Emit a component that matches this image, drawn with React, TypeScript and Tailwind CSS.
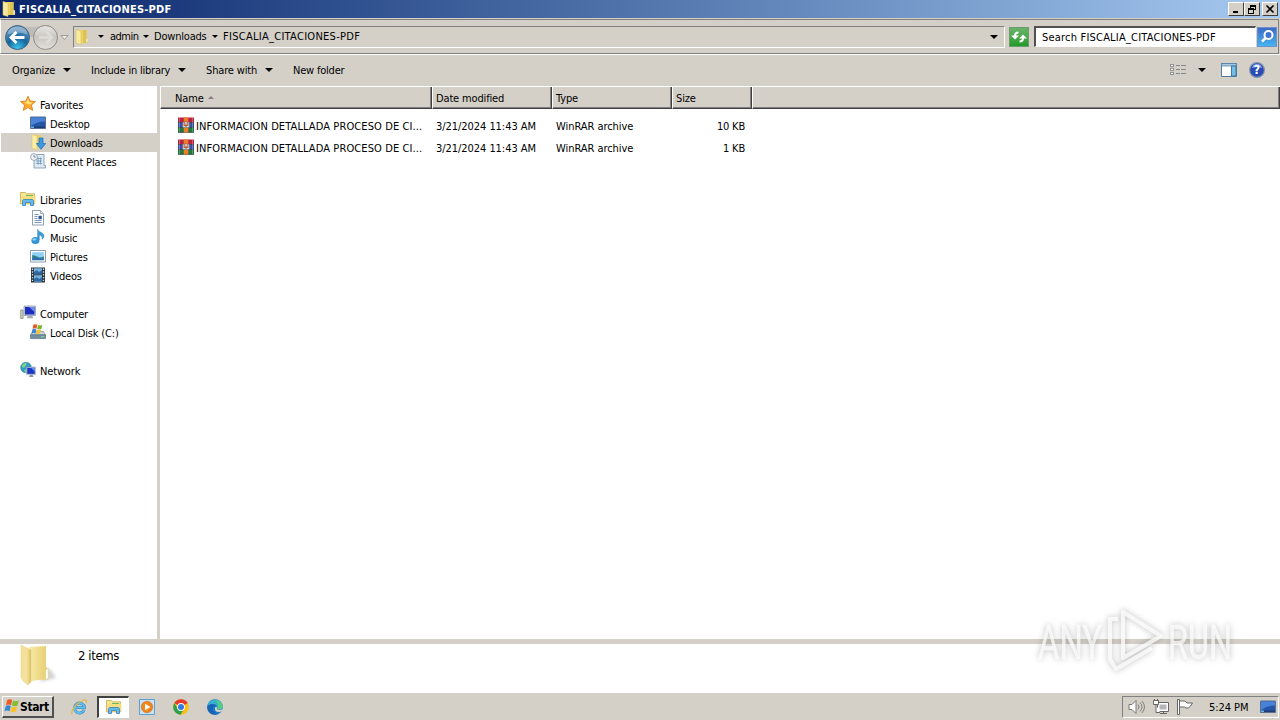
import type { ReactNode } from "react";

type IconProps = { size?: number };

const FolderIcon = ({ size = 16 }: IconProps) => (
  <svg width={size} height={size} viewBox="0 0 16 16" className="shrink-0">
    <path d="M5 1h7.500v13H5z" fill="#ecd469" />
    <path d="M9 1h3.500v8l1.500 1v4H9z" fill="#dfc350" />
    <path d="M2 .5l5 1.500v13.500L2 14z" fill="#f8eba0" stroke="#d9bd55" strokeWidth=".6" />
    <path d="M12.200 9l1.600.5v4h-1.600z" fill="#fff" stroke="#c8b35e" strokeWidth=".4" />
  </svg>
);

const StarIcon = () => (
  <svg width="16" height="16" viewBox="0 0 16 16">
    <path d="M8 .2l2.100 4.800 5.500.5-4.200 3.500 1.300 5.400L8 11.600l-4.700 2.800L4.600 9 .4 5.500 5.900 5z" fill="#fbaa2c" stroke="#d98222" strokeWidth=".9" />
    <path d="M8 2.600l1.400 3.500 3.400.4L10 8.600 8 8 3.600 6.600l2.900-.5z" fill="#ffe27a" />
  </svg>
);

const DesktopIcon = () => (
  <svg width="16" height="16" viewBox="0 0 16 16">
    <path d="M.5 2h15v11.500H.5z" fill="#2455a8" stroke="#5b6f91" />
    <path d="M1 2.500h14v4Q8 6 1 11z" fill="#4a82d8" />
    <path d="M1 11.500h14V13H1z" fill="#1c3c73" />
    <path d="M1 11.500h3V13H1z" fill="#62b4e8" />
  </svg>
);

const DownloadsIcon = () => (
  <svg width="16" height="16" viewBox="0 0 16 16">
    <path d="M2 1h9.500v13H2z" fill="#ecd169" />
    <path d="M2 .5l5 1.200v13.800l-5-1z" fill="#faeea8" stroke="#dcc35f" strokeWidth=".6" />
    <path d="M9 4h4v5.500h2.700L11 15.300 6.300 9.500H9z" fill="#3b9ae3" stroke="#1f69b2" strokeWidth=".7" />
  </svg>
);

const RecentIcon = () => (
  <svg width="16" height="16" viewBox="0 0 16 16">
    <path d="M4 1.500h10v11h1.500V15H4z" fill="#dfe9f2" stroke="#7c8fa3" strokeWidth=".8" />
    <path d="M6 5.500h6M6 8h6M6 10.500h6M8 4.500v7M10.500 4.500v7" stroke="#6c97bb" strokeWidth=".8" />
    <circle cx="4" cy="4" r="3.400" fill="#f3f6fa" stroke="#8996a5" strokeWidth=".8" />
    <path d="M4 2v2h1.800" fill="none" stroke="#53708f" strokeWidth=".8" />
  </svg>
);

const LibrariesIcon = () => (
  <svg width="16" height="16" viewBox="0 0 16 16">
    <path d="M.5 1.500h5l1 1.300h8v10H.5z" fill="#f7e695" stroke="#c9a849" strokeWidth=".8" />
    <path d="M2 4.500h12.500l1 1V12H1z" fill="#f5dd80" />
    <path d="M6 4.500h7" stroke="#6bb867" />
    <path d="M2.500 14.500v-5l1.200-1h8.600l1.200 1v5h-3v-3h-5v3z" fill="#6ab8e8" stroke="#2d84c0" strokeWidth=".8" />
  </svg>
);

const DocumentIcon = () => (
  <svg width="16" height="16" viewBox="0 0 16 16">
    <path d="M2.500.5h8l3 3V15h-11z" fill="#fdfeff" stroke="#8493a5" strokeWidth=".9" />
    <path d="M10.500.5v3h3" fill="#d7e3ef" stroke="#8493a5" strokeWidth=".7" />
    <path d="M4.500 4.500h4M4.500 6.500h3M4.500 8.500h3M4.500 10.500h7M4.500 12.500h7" stroke="#6c8cb4" strokeWidth=".9" />
    <path d="M8.500 5.800h3.300v3.400H8.500z" fill="#305796" />
  </svg>
);

const MusicIcon = () => (
  <svg width="16" height="16" viewBox="0 0 16 16">
    <path d="M7.600 11V.2c.4 2.700 6.400 3.300 6.400 6.600 0 1.600-.8 2.600-2 3.400.6-2.600-.8-3.800-2.700-4.200v5z" fill="#3c9bd9" stroke="#2275b2" strokeWidth=".4" />
    <ellipse cx="5.400" cy="11.500" rx="4" ry="3.600" fill="#2f94d8" />
    <ellipse cx="4.400" cy="10.400" rx="2" ry="1.200" fill="#8dd0f5" />
  </svg>
);

const PicturesIcon = () => (
  <svg width="16" height="16" viewBox="0 0 16 16">
    <path d="M.5 2.500h15V14H.5z" fill="#fff" stroke="#8b9bab" />
    <path d="M2.200 4.200h11.600v8H2.200z" fill="#8fd0f2" />
    <path d="M2.200 7q3 .5 6 2t5.600-1v3.700H2.200z" fill="#2e7f8e" />
    <path d="M2.200 10.500h11.600v1.700H2.200z" fill="#2d69b0" />
  </svg>
);

const VideosIcon = () => (
  <svg width="16" height="16" viewBox="0 0 16 16">
    <path d="M1 .5h14v15H1z" fill="#27333f" />
    <path d="M4 1.200h8v6H4zM4 8.300h8v6.500H4z" fill="#7ab4e0" />
    <path d="M4 5l3-2 2 2 3-2v4H4zM4 12l3-2 2 2 3-2v4.500H4z" fill="#2f6aa8" />
    <path d="M2.500 1.500v14M13.500 1.500v14" stroke="#d6dde4" strokeWidth="1.300" strokeDasharray="1.400 1.400" />
  </svg>
);

const ComputerIcon = () => (
  <svg width="16" height="16" viewBox="0 0 16 16">
    <path d="M.7 5h2.400v8.500H.7z" fill="#c9d5b5" stroke="#788574" strokeWidth=".7" />
    <path d="M4 1h11.500v9.500H4z" fill="#c9cfdb" stroke="#8690a3" strokeWidth=".7" />
    <path d="M5 2h9.500v7.500H5z" fill="#1a2ec0" />
    <path d="M9 2h5.500v5z" fill="#6e8bee" />
    <path d="M8 10.700h4l1.500 2.500h-7z" fill="#a3abb8" />
  </svg>
);

const DiskIcon = () => (
  <svg width="16" height="16" viewBox="0 0 16 16">
    <path d="M2.500 7.500h11l2 3.500H.5z" fill="#c5d3dc" stroke="#71838f" strokeWidth=".6" />
    <path d="M.5 10.800h15v3.800H.5z" fill="#718f9f" stroke="#526b79" strokeWidth=".6" />
    <path d="M11 12.500h3" stroke="#79e26f" />
    <path d="M3.400.6q2-.9 4 .1l-.9 4q-1.800-.9-3.900 0z" fill="#ea5a28" />
    <path d="M8 1q2 .9 4.400 0l-1 3.900q-2 .9-4.200 0z" fill="#79b82f" />
    <path d="M2.400 5.300q2-.9 4 .1l-.9 4q-1.800-.9-4 0z" fill="#3b86d5" />
    <path d="M7 5.600q2 .9 4.200 0l-1 3.900q-2 .9-4.100 0z" fill="#f6c02d" />
  </svg>
);

const NetworkIcon = () => (
  <svg width="16" height="16" viewBox="0 0 16 16">
    <circle cx="6" cy="5.500" r="5.300" fill="#2f9cc6" stroke="#297595" strokeWidth=".6" />
    <path d="M2 3q3-3 5-1.500L5 5 2.500 6zM4 8l3-1 .5 3-2 1z" fill="#7ed28a" />
    <path d="M6.500 5h9v7.700h-9z" fill="#cbd5e2" stroke="#8492a8" strokeWidth=".5" />
    <path d="M7.200 5.800h7.600v6.100H7.200z" fill="#1b35c4" />
    <path d="M11 5.800h3.800v4z" fill="#6990ee" />
    <path d="M10 12.700h2.500l1 2.300H9z" fill="#8791a5" />
  </svg>
);

const RarIcon = () => (
  <svg width="16" height="16" viewBox="0 0 16 16" className="mb-1 shrink-0">
    <path d="M0 .5h16v5H0z" fill="#b82342" />
    <path d="M0 5.500h16v5H0z" fill="#3b50a5" />
    <path d="M0 10.500h16v5H0z" fill="#21793f" />
    <path d="M0 5.500h16M0 10.500h16M0 15.300h16" stroke="#252a33" strokeWidth=".7" />
    <path d="M1.500.5v15M14.500.5v15" stroke="#fff" strokeOpacity=".25" />
    <path d="M5.700.5h4.600v15H5.700z" fill="#ee7c2b" />
    <path d="M4.700 5h6.600v5.500H4.700z" fill="#dce2e8" stroke="#59606b" strokeWidth=".5" />
    <path d="M6.200 5v3.500h3.600V5" fill="none" stroke="#d15728" strokeWidth="1.100" />
    <path d="M8 6.500V10" stroke="#555" strokeWidth=".8" />
  </svg>
);

const Flag = ({ size = 16 }: IconProps) => (
  <svg width={size} height={size} viewBox="0 0 16 16" className="shrink-0">
    <path d="M3.200 2Q6 .3 8.200 2L7 7.200Q4.500 6 2 7.200z" fill="#ee5a26" />
    <path d="M9 2.400q2.800 1.500 6 0l-1.500 5.200q-2.800 1.300-5.600 0z" fill="#82bd35" />
    <path d="M1.800 8q2.600-1.400 5 .1l-1.300 5.200q-2.300-1.500-5 0z" fill="#3586d8" />
    <path d="M7.700 8.500q2.800 1.400 5.500 0L12 13.600q-2.800 1.500-5.600 0z" fill="#f8c22c" />
  </svg>
);

const IeIcon = () => (
  <svg width="18" height="18" viewBox="0 0 18 18" fill="none">
    <path d="M14.200 11.800A5 5 0 1 1 14.500 9.600H5.500" stroke="#2a86c6" strokeWidth="2.800" />
    <path d="M14.200 11.800A5 5 0 1 1 14.500 9.600H5.500" stroke="#62c0f2" strokeWidth="1.800" />
    <path d="M2.500 16.300C0 15.500 4 7.500 9.500 4.200 14 1 17.500.5 16 5.300" stroke="#e5b634" strokeWidth="1.200" />
  </svg>
);

const MediaIcon = () => (
  <svg width="16" height="16" viewBox="0 0 16 16">
    <path d="M.5.5h15v15H.5z" fill="#c9e2f5" stroke="#5d9fd1" />
    <circle cx="8" cy="8" r="5.700" fill="#f08519" stroke="#d06a10" strokeWidth=".6" />
    <path d="M6 4.700L11.500 8 6 11.300z" fill="#fff" />
  </svg>
);

const ChromeIcon = () => (
  <svg width="16" height="16" viewBox="0 0 16 16">
    <circle cx="8" cy="8" r="7.800" fill="#fbc116" />
    <path d="M8 8L1.250 4.100A7.800 7.800 0 0 1 14.750 4.100z" fill="#e33b2e" />
    <path d="M1.250 4.100A7.800 7.800 0 0 0 7.500 15.800L11 10 5 10z" fill="#2da24c" />
    <circle cx="8" cy="8" r="3.900" fill="#fff" />
    <circle cx="8" cy="8" r="3" fill="#3578e5" />
  </svg>
);

const EdgeIcon = () => (
  <svg width="16" height="16" viewBox="0 0 16 16">
    <circle cx="8" cy="8" r="7.800" fill="#1b7ac9" />
    <path d="M.4 7C1.500-1.500 14.500-1.500 15.800 7c.2 3-3 4.200-5.600 3.200C11.500 8 10 5.300 6.500 5.200 3.500 5.100 1 6 .4 7z" fill="#36b0d0" />
    <path d="M9 1q6 1 6.800 6c.2 3-3 4.200-5.600 3.200Q12 6 9 1z" fill="#5fd36b" fillOpacity=".75" />
    <path d="M.3 7.500C2 4 8.500 4 9.500 7.500 6.500 6.200 5 9 6.500 12c1 2 3 3 5 3C5 17.500-.2 13 .3 7.500z" fill="#1763b5" />
    <path d="M9.400 7.600c1 1.200.4 2 .5 2.600 1.600 1.200 4.400 1 6-.4l-.6 1.700c-1.200 1-2.500 1.500-4.100 1.500-3.500 0-4.300-4.500-1.800-5.400z" fill="#d6d1c8" />
  </svg>
);

const Arrow = ({ className = "" }: { className?: string }) => (
  <span className={`h-0 w-0 shrink-0 border-x-[4px] border-t-[4px] border-x-transparent border-t-black ${className}`} />
);

const SmallArrow = ({ className = "" }: { className?: string }) => (
  <span className={`h-0 w-0 shrink-0 border-x-[3px] border-t-[3px] border-x-transparent border-t-black ${className}`} />
);

const WindowButton = ({ children, className = "" }: { children: ReactNode; className?: string }) => (
  <button className={`flex h-[14px] w-4 items-center justify-center border border-t-white border-l-white border-r-[#404040] border-b-[#404040] bg-[#d4d0c8] ${className}`}>
    <svg width="12" height="12" viewBox="0 0 12 12" fill="none" stroke="#000" shapeRendering="crispEdges" className="shrink-0">
      {children}
    </svg>
  </button>
);

const TitleBar = () => (
  <div className="flex h-[18px] items-center bg-linear-to-r from-[#0a246a] to-[#a6caf0] pr-[2px] pl-px">
    <FolderIcon />
    <span className="ml-[2px] pt-[2px] text-[11px] font-bold tracking-[0.22px] text-white">FISCALIA_CITACIONES-PDF</span>
    <div className="ml-auto flex">
      <WindowButton>
        <path d="M3 9h5" strokeWidth="2" />
      </WindowButton>
      <WindowButton>
        <path d="M4 2h6M4 3h6M4.500 2v3M9.500 2v5M8 6.500h2M2 5h6M2 6h6M2.500 5v6M7.500 5v6M2 10.500h6" />
      </WindowButton>
      <WindowButton className="ml-[2px]">
        <path d="M2.500 2.500l7 7M9.500 2.500l-7 7" strokeWidth="1.600" shapeRendering="auto" />
      </WindowButton>
    </div>
  </div>
);

const NavButtons = () => (
  <svg width="70" height="30" viewBox="0 0 70 30" className="shrink-0">
    <defs>
      <radialGradient id="back" cx=".5" cy=".95" r=".8">
        <stop offset="0" stopColor="#38c6ee" />
        <stop offset=".55" stopColor="#17659f" />
        <stop offset="1" stopColor="#5b91bb" />
      </radialGradient>
      <linearGradient id="forward" x1="0" y1="0" x2="0" y2="1">
        <stop offset="0" stopColor="#e8e7e4" />
        <stop offset=".5" stopColor="#c9c6c0" />
        <stop offset="1" stopColor="#e3e1dd" />
      </linearGradient>
    </defs>
    <path d="M14 3q17 4 33 0l10 12H14z" fill="#bdbcb9" />
    <circle cx="16.500" cy="15.500" r="12" fill="url(#back)" stroke="#45647f" />
    <path d="M6.500 12.500Q7.500 4.500 16.500 4.500t10 8q-10-4-20 0z" fill="#fff" fillOpacity=".3" />
    <path d="M15.500 10l-5.500 5.500 5.500 5.500M10.500 15.500h13" fill="none" stroke="#fff" strokeWidth="2.800" />
    <circle cx="44.500" cy="15.500" r="12" fill="url(#forward)" stroke="#8c8b89" />
    <path d="M45.500 10l5.500 5.500-5.500 5.500M51 15.500H38" fill="none" stroke="#dedcd8" strokeWidth="2.500" />
    <path d="M60 13.500h7l-3.500 4z" fill="#eee" stroke="#8a8883" strokeWidth=".8" />
  </svg>
);

const AddressBar = () => (
  <div className="mt-px mr-px flex h-[35px] items-center border border-t-[#808080] border-r-[#808080] border-b-[#808080] border-l-white">
    <NavButtons />
    <div className="ml-[2px] flex h-[22px] min-w-0 flex-1 items-center border border-t-[#808080] border-r-white border-b-white border-l-[#808080] pr-[6px]">
      <FolderIcon />
      <SmallArrow className="ml-[8px]" />
      <span className="ml-[6px] w-[28px] whitespace-nowrap tracking-[-0.5px]">admin</span>
      <SmallArrow className="ml-[5px]" />
      <span className="ml-[5px] w-[53px] whitespace-nowrap tracking-[-0.2px]">Downloads</span>
      <SmallArrow className="ml-[5px]" />
      <span className="ml-[5px] whitespace-nowrap tracking-[0.28px]">FISCALIA_CITACIONES-PDF</span>
      <Arrow className="ml-auto" />
    </div>
    <button className="ml-[4px] flex h-5 w-5 items-center justify-center border border-[#6d9c70] bg-linear-to-b from-[#68b36a] to-[#219b25]">
      <svg width="18" height="18" viewBox="0 0 18 18" fill="none" stroke="#fff" strokeWidth="2">
        <path d="M8.500 4.500Q5 4.500 5 8" />
        <path d="M1 7.500L5 11.500l4-4z" fill="#fff" stroke="none" />
        <path d="M9.500 13.500Q13 13.500 13 10" />
        <path d="M9 10.500l4-4 4 4z" fill="#fff" stroke="none" />
      </svg>
    </button>
    <div className="ml-[5px] flex h-[21px] w-[222px] items-center border-t-2 border-r border-b border-l-2 border-t-[#505050] border-r-white border-b-white border-l-[#505050] bg-white pl-[6px]">
      <span className="whitespace-nowrap pt-px tracking-[0.2px]">Search FISCALIA_CITACIONES-PDF</span>
    </div>
    <button className="mr-px ml-px flex h-5 w-[20px] items-center justify-center border border-[#6d91cc] bg-linear-to-b from-[#3c6ac8] to-[#45b4f0]">
      <svg width="17" height="17" viewBox="0 0 17 17" fill="none" stroke="#fff">
        <circle cx="9.500" cy="7" r="4" fill="#3c73d5" strokeWidth="2" />
        <path d="M6.500 10L3 13.500" strokeWidth="2.500" />
      </svg>
    </button>
  </div>
);

const Toolbar = () => (
  <div className="flex h-[31px] items-center border-t border-white pl-3">
    <span className="w-[44px] whitespace-nowrap pt-[2px] tracking-[-0.15px]">Organize</span>
    <Arrow className="ml-[7px]" />
    <span className="ml-[20px] w-[80px] whitespace-nowrap pt-[2px] tracking-[-0.22px]">Include in library</span>
    <Arrow className="ml-[7px]" />
    <span className="ml-[20px] w-[52px] whitespace-nowrap pt-[2px] tracking-[-0.15px]">Share with</span>
    <Arrow className="ml-[7px]" />
    <span className="ml-[20px] whitespace-nowrap pt-[2px] tracking-[-0.2px]">New folder</span>
    <div className="mr-[15px] ml-auto flex items-center">
      <svg width="16" height="14" viewBox="0 0 16 14" fill="none" shapeRendering="crispEdges">
        <path d="M.5 1.500h3v2h-3zM.5 5.500h3v2h-3zM.5 9.500h3v2h-3z" fill="#fff" stroke="#8e9196" />
        <path d="M6 2.500h4M11 2.500h5M6 6.500h4M11 6.500h5M6 10.500h4M11 10.500h5" stroke="#85888d" />
      </svg>
      <Arrow className="ml-[12px]" />
      <svg width="16" height="14" viewBox="0 0 16 14" className="ml-[15px]">
        <path d="M.5.5h15v13H.5z" fill="#fff" stroke="#507ba0" />
        <path d="M.5.5h15V3H.5z" fill="#a6c9e2" stroke="#507ba0" strokeWidth=".7" />
        <path d="M10.500 3H15v10h-4.500z" fill="#75bee7" stroke="#41789f" />
      </svg>
      <svg width="16" height="16" viewBox="0 0 16 16" className="ml-[12px]">
        <circle cx="8" cy="8" r="7.400" fill="#294bb2" stroke="#8794af" strokeWidth="1.200" />
        <path d="M3 6q1-4 5-4t5 4q-5-2-10 0z" fill="#8aabea" />
        <text x="8" y="12.300" textAnchor="middle" fontSize="12" fontWeight="700" fill="#fff">?</text>
      </svg>
    </div>
  </div>
);

const sections = [
  {
    label: "Favorites",
    icon: <StarIcon />,
    items: [
      { label: "Desktop", icon: <DesktopIcon /> },
      { label: "Downloads", icon: <DownloadsIcon />, selected: true },
      { label: "Recent Places", icon: <RecentIcon /> },
    ],
  },
  {
    label: "Libraries",
    icon: <LibrariesIcon />,
    items: [
      { label: "Documents", icon: <DocumentIcon /> },
      { label: "Music", icon: <MusicIcon /> },
      { label: "Pictures", icon: <PicturesIcon /> },
      { label: "Videos", icon: <VideosIcon /> },
    ],
  },
  {
    label: "Computer",
    icon: <ComputerIcon />,
    items: [{ label: "Local Disk (C:)", icon: <DiskIcon /> }],
  },
  { label: "Network", icon: <NetworkIcon />, items: [] },
];

const Sidebar = () => (
  <div className="flex w-[160px] shrink-0 flex-col gap-[19px] border-r-[3px] border-[#d4d0c8] bg-white pt-[9px]">
    {sections.map((section) => (
      <div key={section.label}>
        <div className="flex h-[19px] items-center gap-[4px] pl-5">
          <span className="pb-px">{section.icon}</span>
          <span className="pt-[2px] tracking-[-0.15px]">{section.label}</span>
        </div>
        {section.items.map((item) => (
          <div
            key={item.label}
            className={`ml-px flex h-[19px] items-center gap-[4px] pl-[29px] ${"selected" in item ? "bg-[#d4d0c8]" : ""}`}
          >
            <span className="pb-px">{item.icon}</span>
            <span className="whitespace-nowrap pt-[2px] tracking-[-0.17px]">{item.label}</span>
          </div>
        ))}
      </div>
    ))}
  </div>
);

const files = [
  { name: "INFORMACION DETALLADA PROCESO DE CI...", date: "3/21/2024 11:43 AM", type: "WinRAR archive", size: "10 KB" },
  { name: "INFORMACION DETALLADA PROCESO DE CI...", date: "3/21/2024 11:43 AM", type: "WinRAR archive", size: "1 KB" },
];

const headCell =
  "flex h-full items-center border-r border-b border-l border-r-[#404040] border-b-[#404040] border-l-white pt-[3px] shadow-[inset_-1px_-1px_0_#808080]";

const FileList = () => (
  <div className="flex-1 bg-white">
    <div className="flex h-[23px] items-center border-t border-t-white bg-[#d4d0c8] tracking-[-0.15px]">
      <div className={`${headCell} w-[272px] pl-[14px]`}>
        Name
        <span className="mb-[3px] ml-[4px] h-0 w-0 border-x-[3px] border-b-[3px] border-x-transparent border-b-[#808080]" />
      </div>
      <div className={`${headCell} w-[120px] pl-[3px]`}>Date modified</div>
      <div className={`${headCell} w-[120px] pl-[3px]`}>Type</div>
      <div className={`${headCell} w-[80px] pl-[3px]`}>Size</div>
      <div className={`${headCell} flex-1`} />
    </div>
    <div className="pt-[6px]">
      {files.map((file, i) => (
        <div key={i} className="flex h-[22px] items-center whitespace-nowrap pt-[2px] tracking-[-0.05px]">
          <div className="flex w-[276px] items-center gap-[2px] pl-[18px]">
            <RarIcon />
            <span className="tracking-[0.1px]">{file.name}</span>
          </div>
          <span className="w-[120px]">{file.date}</span>
          <span className="w-[120px]">{file.type}</span>
          <span className="w-[69px] text-right tracking-[-0.2px]">{file.size}</span>
        </div>
      ))}
    </div>
  </div>
);

const DetailsPane = () => (
  <div className="flex h-[53px] border-t-[5px] border-[#d4d0c8] bg-white">
    <svg width="40" height="44" viewBox="0 0 40 44" className="ml-5">
      <defs>
        <linearGradient id="folderFront">
          <stop offset="0" stopColor="#f3e09a" />
          <stop offset=".6" stopColor="#f3e19a" />
          <stop offset="1" stopColor="#d9bf66" />
        </linearGradient>
        <linearGradient id="folderBack">
          <stop offset="0" stopColor="#f8eaa6" />
          <stop offset="1" stopColor="#e6cd6f" />
        </linearGradient>
        <filter id="soft">
          <feGaussianBlur stdDeviation="1.500" />
        </filter>
      </defs>
      <path d="M20 38l16-4-5-8-7-2z" fill="#aaa" fillOpacity=".5" filter="url(#soft)" />
      <path d="M9 3l17-1v21l2 2v10l-17 2z" fill="url(#folderBack)" />
      <path d="M1 1l10 5v32l-3 3-5-4-2-4z" fill="url(#folderFront)" stroke="#e5cf7e" strokeWidth=".5" />
      <path d="M25.500 26l2.800-2v10l-2.800 2z" fill="#fffef2" stroke="#d9c575" strokeWidth=".5" />
    </svg>
    <span className="mt-[5px] ml-[18px] text-[13px] tracking-[-0.4px]">2 items</span>
  </div>
);

const Tray = () => (
  <div className="mr-px ml-auto flex h-[22px] w-[157px] items-center border border-t-[#808080] border-r-white border-b-white border-l-[#808080] pl-[5px]">
    <svg width="17" height="16" viewBox="0 0 17 16" fill="none" stroke="#777">
      <path d="M1 5.500h3l4-4v13l-4-4H1z" fill="#fff" />
      <path d="M10 5.500q2 2.500 0 5M12 3.500q4 4.500 0 9M14 2q5 6 0 12" strokeWidth=".9" />
    </svg>
    <svg width="16" height="16" viewBox="0 0 16 16" fill="none" className="ml-[8px]">
      <path d="M4.500 3.500h11v9h-11zM7 14.500h7M10.500 12.500v2" fill="#fff" stroke="#666" />
      <path d="M6.500 5.500h7v5h-7z" fill="#b5b5b5" />
      <path d="M.5 1.500v4h5v-4zM3 5.500v8h4M1.500 0v1.500M4.500 0v1.500" fill="#fff" stroke="#666" />
    </svg>
    <svg width="17" height="16" viewBox="0 0 17 16" fill="#fff" stroke="#666" className="ml-[8px]">
      <path d="M.5.5h2v15h-2z" />
      <path d="M2.500 2H8l2 2h5.500L13 7.500 11.500 9H9L7.500 8h-5z" />
    </svg>
    <span className="ml-[15px] w-[41px] whitespace-nowrap pt-[2px] tracking-[-0.05px]">5:24 PM</span>
    <span className="ml-[10px]">
      <DesktopIcon />
    </span>
  </div>
);

const Taskbar = () => (
  <div className="flex h-[28px] items-center border-t border-white bg-[#d4d0c8]">
    <button className="ml-[2px] flex h-[22px] w-[52px] items-center border-t border-r-2 border-b-2 border-l border-t-white border-r-[#505050] border-b-[#505050] border-l-white pl-px">
      <Flag />
      <span className="pt-[2px] text-[12px] font-bold tracking-[-0.4px]">Start</span>
    </button>
    <div className="ml-[16px] flex items-center">
      <IeIcon />
      <div className="ml-[9px] flex h-[22px] w-[32px] items-center justify-center border-t-2 border-r border-b border-l-2 border-t-[#404040] border-r-white border-b-white border-l-[#404040] bg-white">
        <LibrariesIcon />
      </div>
      <span className="ml-[10px]">
        <MediaIcon />
      </span>
      <span className="ml-[18px]">
        <ChromeIcon />
      </span>
      <span className="ml-[18px]">
        <EdgeIcon />
      </span>
    </div>
    <Tray />
  </div>
);

const Watermark = () => (
  <svg
    width="220"
    height="80"
    viewBox="0 0 220 80"
    className="pointer-events-none absolute top-[602px] left-[1030px] overflow-visible font-['Roboto',sans-serif] drop-shadow-[0_0_3px_rgba(0,0,0,0.35)]"
    fill="#fff"
    fillOpacity=".7"
    stroke="#fff"
    strokeOpacity=".6"
  >
    <text x="8" y="57" fontSize="49" fontWeight="400" strokeWidth=".5" textLength="64" lengthAdjust="spacingAndGlyphs">ANY</text>
    <text x="138" y="57" fontSize="49" fontWeight="400" strokeWidth=".5" textLength="64" lengthAdjust="spacingAndGlyphs">RUN</text>
    <g fill="none" strokeOpacity=".75" strokeWidth="4" strokeLinejoin="round">
      <path d="M93 10l38 24-38 22z" />
      <path d="M88 17h-8v40l6 10 36-21" />
    </g>
  </svg>
);

const App = () => (
  <div className="relative flex h-[720px] w-[1280px] flex-col overflow-hidden bg-[#d4d0c8] font-['DejaVu_Sans_Condensed','DejaVu_Sans',sans-serif] text-[11px] leading-[14px] text-black">
    <TitleBar />
    <AddressBar />
    <Toolbar />
    <div className="mt-px flex min-h-0 flex-1">
      <Sidebar />
      <FileList />
    </div>
    <DetailsPane />
    <Taskbar />
    <Watermark />
  </div>
);

export default App;
